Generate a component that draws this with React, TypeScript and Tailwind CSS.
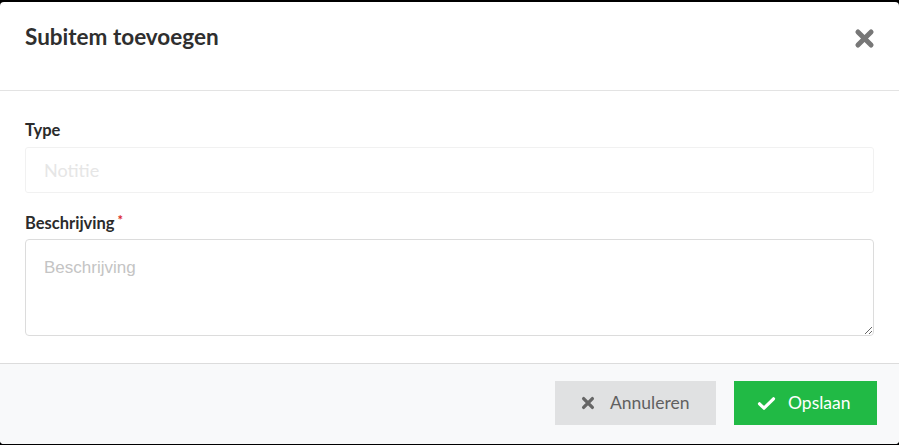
import React from 'react';

const lato = { fontFamily: 'Lato, "Noto Sans", sans-serif' };

const TimesIcon = ({ size, color, width }: { size: number; color: string; width: number }) => (
    <svg width={size} height={size} viewBox="0 0 16 16" fill="none">
        <path d="M3 3 L13 13 M13 3 L3 13" stroke={color} strokeWidth={width} strokeLinecap="round" />
    </svg>
);

const CheckIcon = () => (
    <svg width="19" height="15" viewBox="0 0 19 15" fill="none">
        <path d="M2.5 7.8 L7 12.2 L16.5 2.8" stroke="#ffffff" strokeWidth="3.2" strokeLinecap="round" strokeLinejoin="round" />
    </svg>
);

export default function App() {
    return (
        <div className="w-[899px] h-[445px] bg-black pt-[2px] pb-[1px]" style={lato}>
            <div className="h-[442px] bg-white rounded-[4px] flex flex-col overflow-hidden">
                {/* Header */}
                <div className="h-[89px] shrink-0 border-b border-[#e3e3e3] px-[25px] pt-[21px] flex items-start justify-between">
                    <h2 className="text-[22.5px] leading-[28px] font-bold text-[#2f2f2f]">Subitem toevoegen</h2>
                    <button className="mt-[5px] mr-[-1px]">
                        <TimesIcon size={21} color="#777777" width={3.8} />
                    </button>
                </div>

                {/* Body */}
                <div className="h-[272px] shrink-0 px-[25px] pt-[29px]">
                    <label className="block text-[16.5px] leading-[20px] font-bold text-[#2b2b2b] mb-[7px]">Type</label>
                    <input
                        disabled
                        placeholder="Notitie"
                        className="block w-full h-[46px] border border-[#f1f1f1] rounded-[3px] bg-white px-[18px] text-[18px] placeholder:text-[#e6e6e6]"
                        style={lato}
                    />
                    <label className="block text-[16.5px] leading-[20px] font-bold text-[#2b2b2b] mt-[20px] mb-[6px]">
                        Beschrijving<sup className="text-[13px] text-[#db2828] ml-[3px] relative top-[-4px]">*</sup>
                    </label>
                    <textarea
                        placeholder="Beschrijving"
                        className="block w-full h-[97px] border border-[#dcdcdc] rounded-[4px] px-[18px] pt-[15px] text-[17px] placeholder:text-[#c4c4c4] outline-none"
                        style={{ fontFamily: '"Liberation Sans", Arial, sans-serif' }}
                    />
                </div>

                {/* Footer */}
                <div className="flex-1 border-t border-[#dcdcdc] bg-[#f8f9fa] flex justify-end items-start pt-[17px] pr-[22px] gap-[18px]">
                    <button className="h-[44px] w-[161px] bg-[#e0e1e2] text-[#606060] text-[17.5px] flex items-center pl-[26px] gap-[15px]">
                        <TimesIcon size={14} color="#666666" width={3.8} />
                        <span>Annuleren</span>
                    </button>
                    <button className="h-[44px] w-[143px] bg-[#21ba45] text-white text-[17.5px] flex items-center pl-[23px] gap-[12px]">
                        <CheckIcon />
                        <span>Opslaan</span>
                    </button>
                </div>
            </div>
        </div>
    );
}
